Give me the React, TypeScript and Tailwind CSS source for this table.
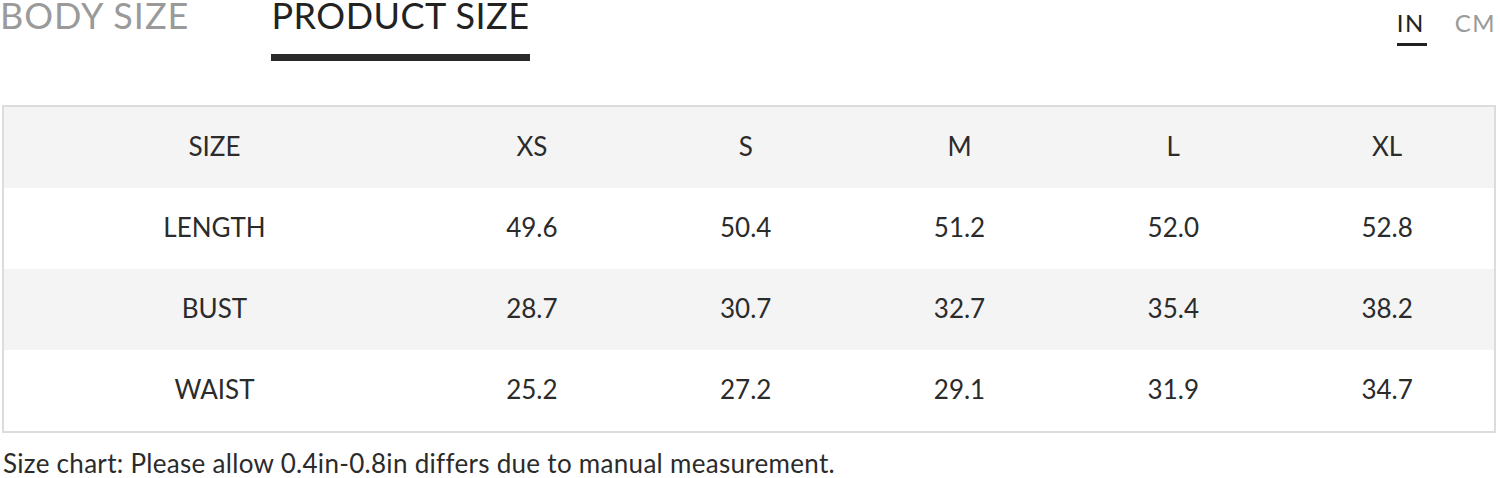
import React from 'react'

const sizes = ['XS', 'S', 'M', 'L', 'XL']

const rows = [
  { name: 'LENGTH', values: ['49.6', '50.4', '51.2', '52.0', '52.8'] },
  { name: 'BUST', values: ['28.7', '30.7', '32.7', '35.4', '38.2'] },
  { name: 'WAIST', values: ['25.2', '27.2', '29.1', '31.9', '34.7'] },
]

function Row({ name, values, shaded }: { name: string; values: string[]; shaded: boolean }) {
  return (
    <div className={`flex h-[81px] items-center pb-[4px] ${shaded ? 'bg-[#f4f4f4]' : 'bg-white'}`}>
      <div className="w-[421px] text-center">{name}</div>
      {values.map((v, i) => (
        <div key={i} className="flex-1 text-center">
          {v}
        </div>
      ))}
    </div>
  )
}

export default function App() {
  return (
    <div className="w-[1500px] h-[478px] overflow-hidden bg-white font-['Lato',sans-serif] text-[#2b2b2b]">
      {/* tabs */}
      <div className="flex items-start h-[105px]">
        <div className="text-[36px] leading-none tracking-[1px] text-[#9a9a9a] mt-[-3px]">BODY SIZE</div>
        <div className="ml-[82px] flex flex-col">
          <div className="text-[36px] leading-none tracking-[0.5px] text-[#222] mt-[-3px]">PRODUCT SIZE</div>
          <div className="mt-[21px] h-[7px] w-[259px] bg-[#2a2a2a]" />
        </div>
        <div className="ml-auto mr-[4px] mt-[11px] flex gap-[28px] text-[24px] leading-none tracking-[1.5px]">
          <div className="flex flex-col">
            <span className="text-[#222]">IN</span>
            <span className="mt-[8px] h-[3px] w-[30px] bg-[#222]" />
          </div>
          <span className="text-[#9a9a9a]">CM</span>
        </div>
      </div>

      {/* table */}
      <div className="ml-[2px] w-[1494px] border-2 border-[#dcdcdc] text-[26px] leading-none">
        <div className="flex h-[81px] items-center pb-[4px] bg-[#f4f4f4]">
          <div className="w-[421px] text-center">SIZE</div>
          {sizes.map((s) => (
            <div key={s} className="flex-1 text-center">
              {s}
            </div>
          ))}
        </div>
        {rows.map((r, i) => (
          <Row key={r.name} name={r.name} values={r.values} shaded={i === 1} />
        ))}
      </div>

      <p className="mt-[17px] ml-[3px] text-[26px] leading-none tracking-[0.3px] text-[#2b2b2b]">
        Size chart: Please allow 0.4in-0.8in differs due to manual measurement.
      </p>
    </div>
  )
}
